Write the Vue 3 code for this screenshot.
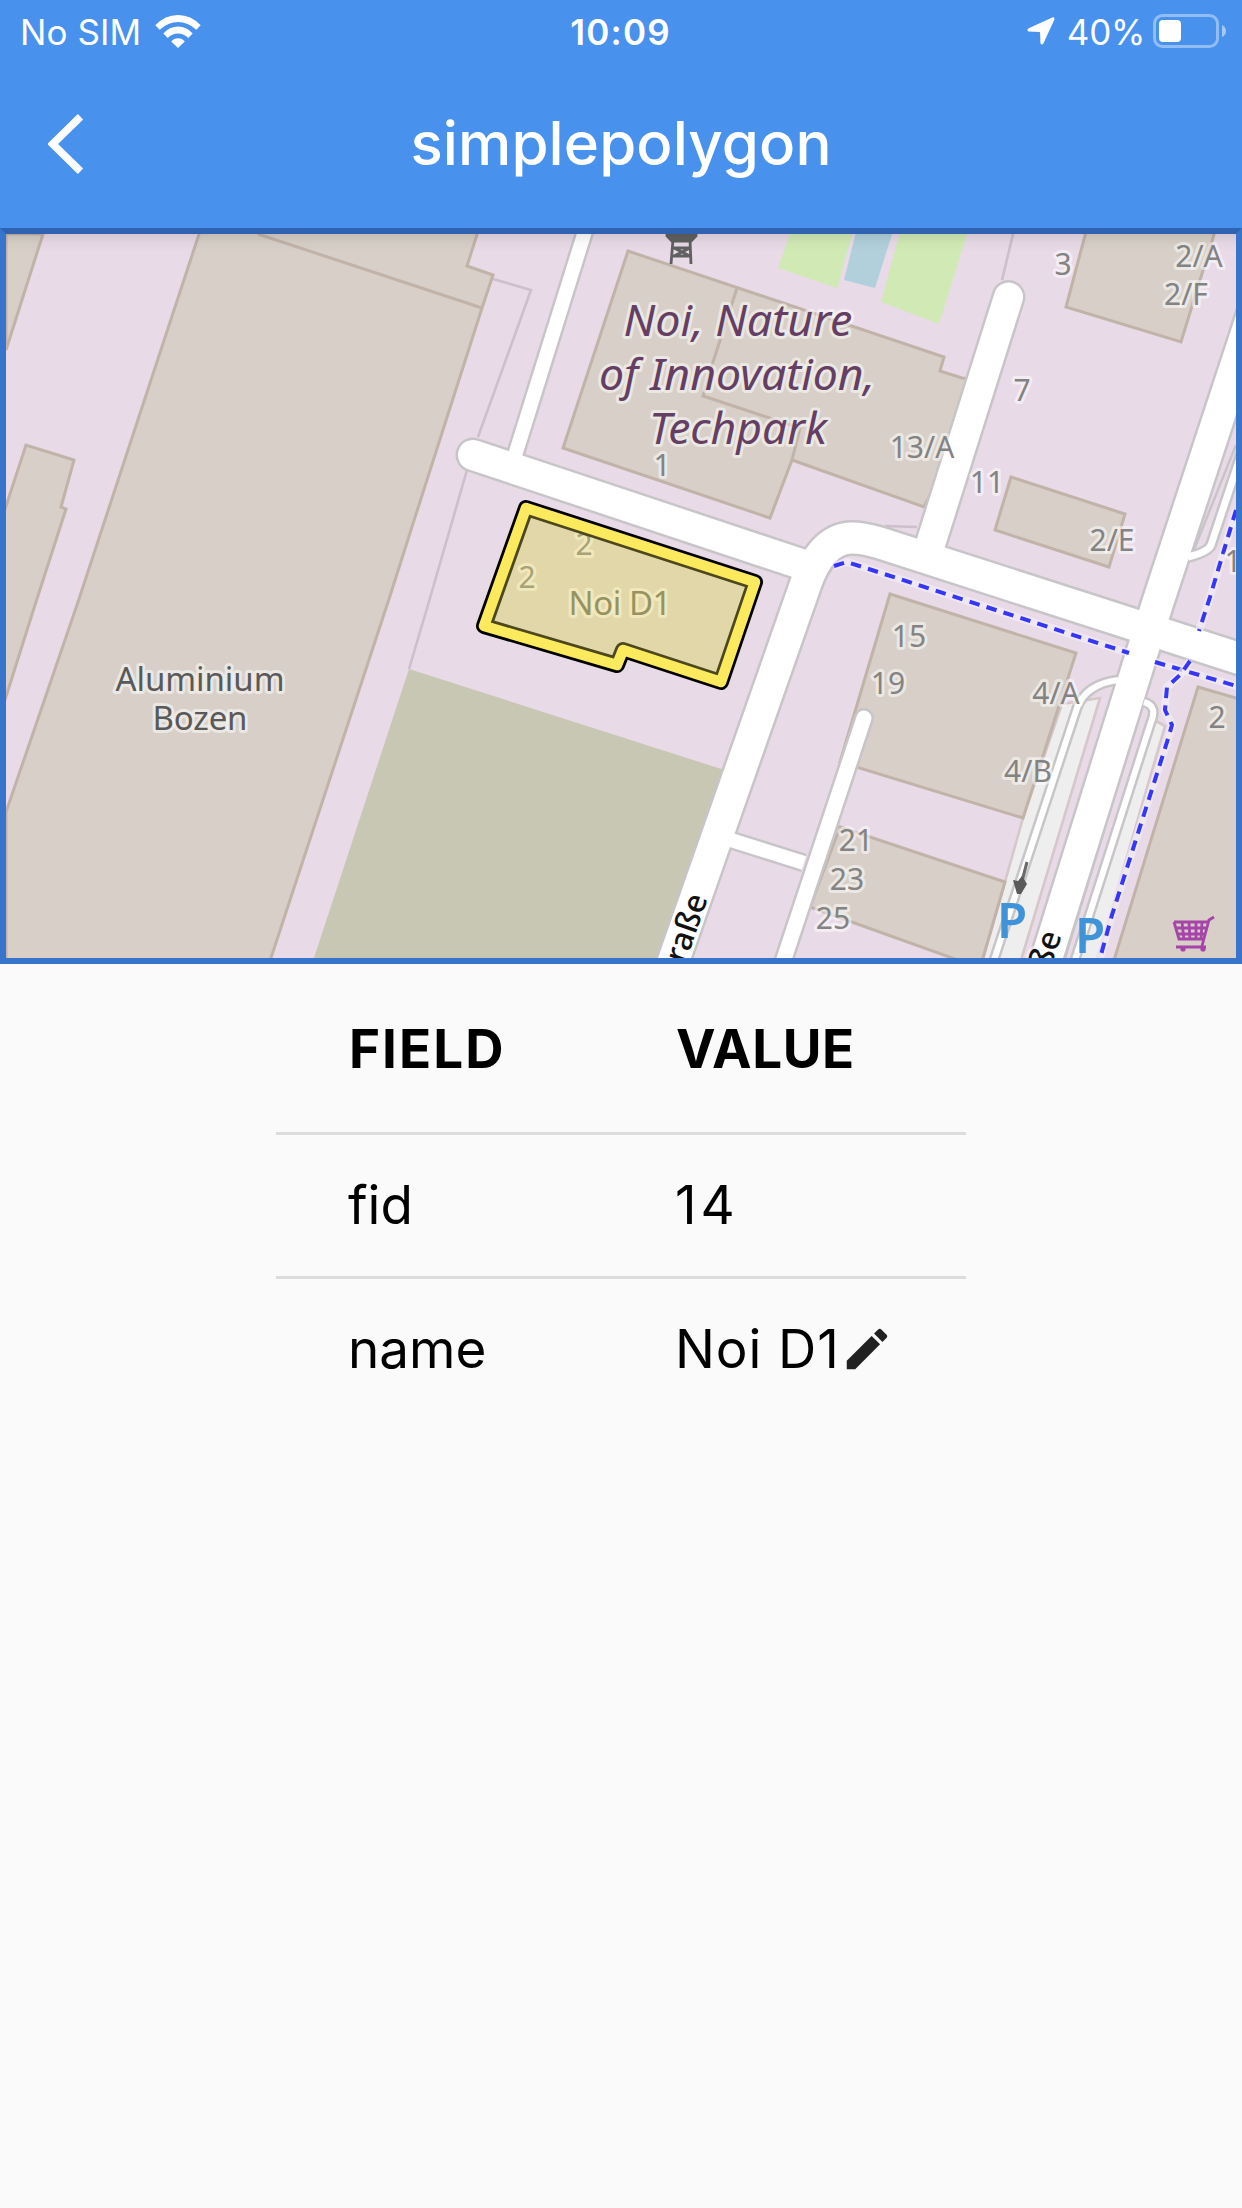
<script setup>
const buildings = [
  '6,234 43,234 6,350',
  '-10,555 26,445 74,460 61,507 66,509 35,605 4,703',
  '203,222 78,602 6,812 6,970 267,970 390,596 410,533 482,308 493,275 467,266 480,225',
  '628,251 944,357 940,371 962,378 990,380 924,507 792,460 770,518 563,448',
  '1087,228 1066,307 1181,342 1216,228',
  '1011,477 1125,514 1109,567 995,530',
  '890,594 1076,653 1023,818 840,762',
  '840,827 1005,882 980,968 810,907',
  '1198,687 1250,702 1250,970 1111,970',
  '526,508 755,582 721,682 623,650 617,665 484,626',
]

const walls = [
  '258,234 482,308',
  '737,288 713,362 703,396 800,428 792,460',
]

const fences = [
  '493,279 531,290 478,437',
  '467,470 428,605 409,669',
  '1014,230 1002,280',
  '885,526 917,527',
]

const roads = [
  { d: 'M1118 680 Q1086 684 1077 708 L994 960', w: 6 },
  { d: 'M1144 702 Q1158 706 1151 722 L1075 960', w: 6 },
  { d: 'M1246 440 L1211 545 Q1208 552 1188 557', w: 7 },
  { d: 'M586 228 L512 465', w: 14 },
  { d: 'M864 718 L781 968', w: 15, round: true },
  { d: 'M715 835 L804 863', w: 14 },
  { d: 'M1008.5 297 L929 549', w: 29, round: true },
  { d: 'M473 455 L801 564', w: 30, round: true },
  { d: 'M671 968 L806 583 C815 558 830 538 852 538 C862 538 870 540 880 543 L1250 662', w: 31 },
  { d: 'M1283 222 L1157 605 L1043 970', w: 31 },
]

const footways = [
  'M834 566 L847 562 L1129 653',
  'M1155 662 L1240 687',
  'M1236 510 L1210 597 L1199 631',
  'M1190 661 L1180 675 L1167 687 L1165 710 L1172 725 L1167 742 L1112 915 L1099 962',
]

const numbers = [
  { t: '1', x: 662, y: 476 },
  { t: '2', x: 584, y: 555 },
  { t: '2', x: 527, y: 588 },
  { t: '3', x: 1063, y: 275 },
  { t: '7', x: 1022, y: 401 },
  { t: '13/A', x: 922, y: 458 },
  { t: '11', x: 987, y: 493 },
  { t: '2/E', x: 1112, y: 551 },
  { t: '2/A', x: 1199, y: 267 },
  { t: '2/F', x: 1186, y: 305 },
  { t: '1', x: 1233, y: 572 },
  { t: '15', x: 909, y: 647 },
  { t: '19', x: 888, y: 694 },
  { t: '4/A', x: 1056, y: 704 },
  { t: '4/B', x: 1028, y: 782 },
  { t: '21', x: 856, y: 851 },
  { t: '23', x: 847, y: 890 },
  { t: '25', x: 833, y: 929 },
  { t: '2', x: 1217, y: 728 },
]

const outline = '526,508 755,582 721,682 623,650 617,665 484,626'

const rows = [
  { field: 'fid', value: '14', editable: false },
  { field: 'name', value: 'Noi D1', editable: true },
]
</script>

<template>
  <div class="screen">
    <header class="top">
      <div class="status">
        <div class="side">
          <span class="carrier">No SIM</span>
          <svg class="wifi" width="46" height="33" viewBox="0 0 46 33">
            <path d="M0.3 10.3 Q10 0 23 0 Q36 0 45.7 10.3 L41.3 14.8 Q33 7 23 7 Q13 7 4.7 14.8 Z" />
            <path d="M8.3 18.4 Q14.5 11.5 23 11.5 Q31.5 11.5 37.7 18.4 L33.2 23 Q29 18.4 23 18.4 Q17 18.4 12.8 23 Z" />
            <path d="M16.2 26.5 Q19 23.2 23 23.2 Q27 23.2 29.8 26.5 L23 33 Z" />
          </svg>
        </div>
        <span class="clock">10:09</span>
        <div class="side end">
          <svg class="location" width="28" height="28" viewBox="0 0 28 28">
            <path d="M25.3 0.4 L1.2 11.4 Q-0.6 14.1 1.8 14.6 L12.3 15 Q13.1 15 13.1 15.9 L13.4 26 Q14.3 28.7 16.4 26.6 L27.4 2.4 Q27.8 0 25.3 0.4 Z" />
          </svg>
          <span class="percent">40%</span>
          <svg class="battery" width="74" height="34" viewBox="0 0 74 34">
            <rect x="1.5" y="1.5" width="63" height="31" rx="8" fill="none" stroke="#fff" stroke-opacity=".4" stroke-width="3" />
            <rect x="6" y="6" width="22" height="22" rx="4" fill="#fff" />
            <path d="M69 11 Q73 13 73 17 Q73 21 69 23 Z" fill="#fff" fill-opacity=".5" />
          </svg>
        </div>
      </div>
      <div class="bar">
        <svg class="back" width="36" height="60" viewBox="0 0 36 60">
          <path d="M32.5 2.8 L4.6 30 L32.5 57.2" fill="none" stroke="#fff" stroke-width="7.6" />
        </svg>
        <h1 class="title">simplepolygon</h1>
      </div>
    </header>

    <div class="map">
      <svg class="canvas" width="1230" height="724" viewBox="6 234 1230 724">
        <defs>
          <linearGradient id="shade" x1="0" y1="0" x2="0" y2="1">
            <stop offset="0" stop-color="#000" stop-opacity=".09" />
            <stop offset=".5" stop-color="#000" stop-opacity=".025" />
            <stop offset="1" stop-color="#000" stop-opacity="0" />
          </linearGradient>
        </defs>
        <rect x="6" y="234" width="1230" height="724" fill="#e8dae7" />
        <polygon class="plot" points="409,669 740,775 670,970 310,970" />
        <polygon class="grass" points="792,228 778,268 837,288 854,228" />
        <polygon class="pool" points="857,228 844,280 875,288 894,228" />
        <polygon class="grass" points="901,228 881,302 939,324 969,228" />
        <polyline v-for="p in fences" :key="p" class="fence" :points="p" />
        <polygon class="parking" points="1062,704 1100,698 1018,970 980,970 1023,818" />
        <polygon class="parking" points="1154,720 1165,726 1094,970 1074,970" />
        <polygon v-for="p in buildings" :key="p" class="building" :points="p" />
        <polyline v-for="p in walls" :key="p" class="wall" :points="p" />

        <path d="M1236 445 L1193 552" class="kerb" />
        <path d="M1142 706 L1065 958" class="kerb" />
        <path
          v-for="r in roads" :key="'c' + r.d" :d="r.d" fill="none" stroke="#c8c5c8"
          :stroke-width="r.w + 5" :stroke-linecap="r.round ? 'round' : 'butt'"
        />
        <path
          v-for="r in roads" :key="'f' + r.d" :d="r.d" fill="none" stroke="#fff"
          :stroke-width="r.w" :stroke-linecap="r.round ? 'round' : 'butt'"
        />

        <g v-for="d in footways" :key="d">
          <path :d="d" class="path-halo" />
          <path :d="d" class="path-dash" />
        </g>

        <g class="tower">
          <path d="M667 228 H696 V236 L691 241 H672 L667 236 Z" fill="#606060" />
          <path d="M673 240 L671 264 M690 240 L691 264 M673 248 H690 M672 256 H691 M674 256 L690 248 M674 248 L690 256" />
        </g>
        <g class="oneway">
          <path d="M1027 862 L1021 885" />
          <polygon points="1013,880 1018,881 1022,876 1027,884 1021,894 1017,894" />
        </g>

        <g class="number">
          <text v-for="n in numbers" :key="n.t + n.x" :x="n.x" :y="n.y">{{ n.t }}</text>
        </g>
        <g class="park-name">
          <text x="738" y="336" textLength="229" lengthAdjust="spacingAndGlyphs">Noi, Nature</text>
          <text x="737" y="390" textLength="276" lengthAdjust="spacingAndGlyphs">of Innovation,</text>
          <text x="738" y="444" textLength="178" lengthAdjust="spacingAndGlyphs">Techpark</text>
        </g>
        <g class="place">
          <text x="200" y="691" textLength="169">Aluminium</text>
          <text x="200" y="730" textLength="95">Bozen</text>
          <text x="620" y="615" textLength="103" class="muted">Noi D1</text>
        </g>
        <g class="street">
          <text transform="translate(708 898) rotate(-71)">Straße</text>
          <text transform="translate(1062 935) rotate(-71)">Straße</text>
        </g>
        <g class="p-sign">
          <text x="1012" y="938">P</text>
          <text x="1090" y="953">P</text>
        </g>
        <g class="cart">
          <path d="M1214 917 L1209 920 L1202 946 M1174 922 H1208 M1174 922 L1179 939 H1204 M1176 928 H1206 M1178 934 H1204 M1182 922 L1184 940 M1189 922 L1190 940 M1196 922 L1196 940 M1202 922 L1201 940 M1176 947 H1206" />
          <circle cx="1183" cy="949" r="2.6" />
          <circle cx="1203" cy="949" r="2.6" />
        </g>

        <polygon :points="outline" class="sel-edge" />
        <polygon :points="outline" class="sel-fill" />
        <polygon :points="outline" class="sel-line" />
        <rect x="6" y="234" width="1230" height="18" fill="url(#shade)" />
      </svg>
    </div>

    <div class="table">
      <div class="row head">
        <div class="cell wide">FIELD</div>
        <div class="cell">VALUE</div>
      </div>
      <div v-for="r in rows" :key="r.field" class="row">
        <div class="cell">{{ r.field }}</div>
        <div class="cell value" :class="{ digits: !r.editable }">
          <span>{{ r.value }}</span>
          <svg v-if="r.editable" class="pencil" width="54" height="54" viewBox="0 0 24 24">
            <path d="M3 17.25V21h3.75L17.81 9.94l-3.75-3.75L3 17.25zM20.71 7.04c.39-.39.39-1.02 0-1.41l-2.34-2.34c-.39-.39-1.02-.39-1.41 0l-1.83 1.83 3.75 3.75 1.83-1.83z" />
          </svg>
        </div>
      </div>
    </div>
  </div>
</template>

<style>
body {
  background: #fafafa;
}
</style>

<style scoped>
.screen {
  width: 1242px;
  height: 2208px;
  overflow: hidden;
  background: #fafafa;
  font-family: Inter, "Liberation Sans", sans-serif;
  color: #000;
}
.top {
  height: 228px;
  background: #4891ec;
  color: #fff;
}
.status {
  display: grid;
  grid-template-columns: 1fr auto 1fr;
  align-items: center;
  height: 60px;
  padding: 0 15px 0 20px;
  font-size: 35px;
  line-height: 60px;
}
.side {
  display: flex;
  align-items: center;
  height: 60px;
}
.end {
  justify-content: flex-end;
}
.carrier {
  width: 121px;
  padding-top: 2px;
  white-space: nowrap;
  letter-spacing: 0.1px;
}
.wifi {
  margin-left: 14px;
}
.wifi,
.location {
  fill: #fff;
}
.clock {
  padding-top: 2px;
  font-weight: 600;
  letter-spacing: 1.2px;
  margin-left: -6px;
}
.location {
  margin-right: 12px;
}
.percent {
  padding-top: 2px;
  margin-right: 8px;
  letter-spacing: -0.3px;
}
.bar {
  display: grid;
  grid-template-columns: 84px 1fr 84px;
  align-items: center;
  height: 168px;
}
.back {
  margin-left: 48px;
}
.title {
  margin: -2px 0 0;
  text-align: center;
  font-size: 60px;
  font-weight: 500;
  line-height: 72px;
  letter-spacing: 0.1px;
}
.map {
  box-sizing: border-box;
  height: 736px;
  border: 6px solid #3874cb;
  border-top-color: #2f62b0;
}
.canvas {
  display: block;
}
.plot {
  fill: #c7c7b4;
}
.grass {
  fill: #d1eab5;
}
.pool {
  fill: #b1d0dc;
}
.fence {
  fill: none;
  stroke: #cdbfcd;
  stroke-width: 2.6;
}
.parking {
  fill: #eeeeee;
  stroke: #d6c7c9;
  stroke-width: 2.6;
}
.building {
  fill: #d7cfc8;
  stroke: #c2b3a9;
  stroke-width: 3;
}
.wall {
  fill: none;
  stroke: #c2b3a9;
  stroke-width: 3;
}
.kerb {
  fill: none;
  stroke: #c8c4c8;
  stroke-width: 2.5;
}
.path-halo {
  fill: none;
  stroke: #f2ecf6;
  stroke-width: 8;
  stroke-opacity: 0.7;
}
.path-dash {
  fill: none;
  stroke: #3636fb;
  stroke-width: 4;
  stroke-dasharray: 10.5 7.3;
}
.tower path {
  stroke: #606060;
  stroke-width: 2.8;
}
.oneway path {
  fill: none;
  stroke: #6a6a6a;
  stroke-width: 3;
}
.oneway polygon {
  fill: #5a5a5a;
}
text {
  font-family: "Noto Sans", sans-serif;
  text-anchor: middle;
  paint-order: stroke;
  stroke: rgba(255, 255, 255, 0.5);
  stroke-width: 6px;
  stroke-linejoin: round;
}
.number text {
  font-size: 30px;
  fill: #838383;
}
.park-name text {
  font-size: 44px;
  font-style: italic;
  fill: #643f63;
}
.place text {
  font-size: 33px;
  fill: #595959;
}
.place .muted {
  fill: #6c6d62;
}
.street text {
  font-size: 32px;
  font-weight: 500;
  fill: #111;
  text-anchor: end;
}
.p-sign text {
  font-size: 49px;
  font-weight: 600;
  fill: #3f93d8;
  stroke: none;
}
.cart {
  fill: #a645a8;
}
.cart path {
  fill: none;
  stroke: #a645a8;
  stroke-width: 2.8;
}
.sel-edge {
  fill: none;
  stroke: #000;
  stroke-width: 16px;
  stroke-linejoin: round;
}
.sel-fill {
  fill: #fdec5f;
  fill-opacity: 0.3;
}
.sel-line {
  fill: none;
  stroke: #fbea5e;
  stroke-width: 10.5px;
  stroke-linejoin: round;
}
.table {
  width: 690px;
  margin: 0 auto;
  font-size: 53px;
}
.row {
  box-sizing: border-box;
  display: grid;
  grid-template-columns: 327px 1fr;
  align-items: center;
  height: 144px;
  padding: 0 0 2px 72px;
  border-top: 3px solid #dcdcdc;
}
.head {
  height: 168px;
  padding: 2px 0 0 73px;
  border-top: 0;
  font-weight: 700;
  letter-spacing: 0.6px;
}
.cell {
  display: flex;
  align-items: center;
  white-space: nowrap;
}
.wide {
  letter-spacing: 2px;
}
.value {
  letter-spacing: 0.9px;
}
.digits {
  letter-spacing: 4px;
}
.pencil {
  fill: #212121;
}
</style>
